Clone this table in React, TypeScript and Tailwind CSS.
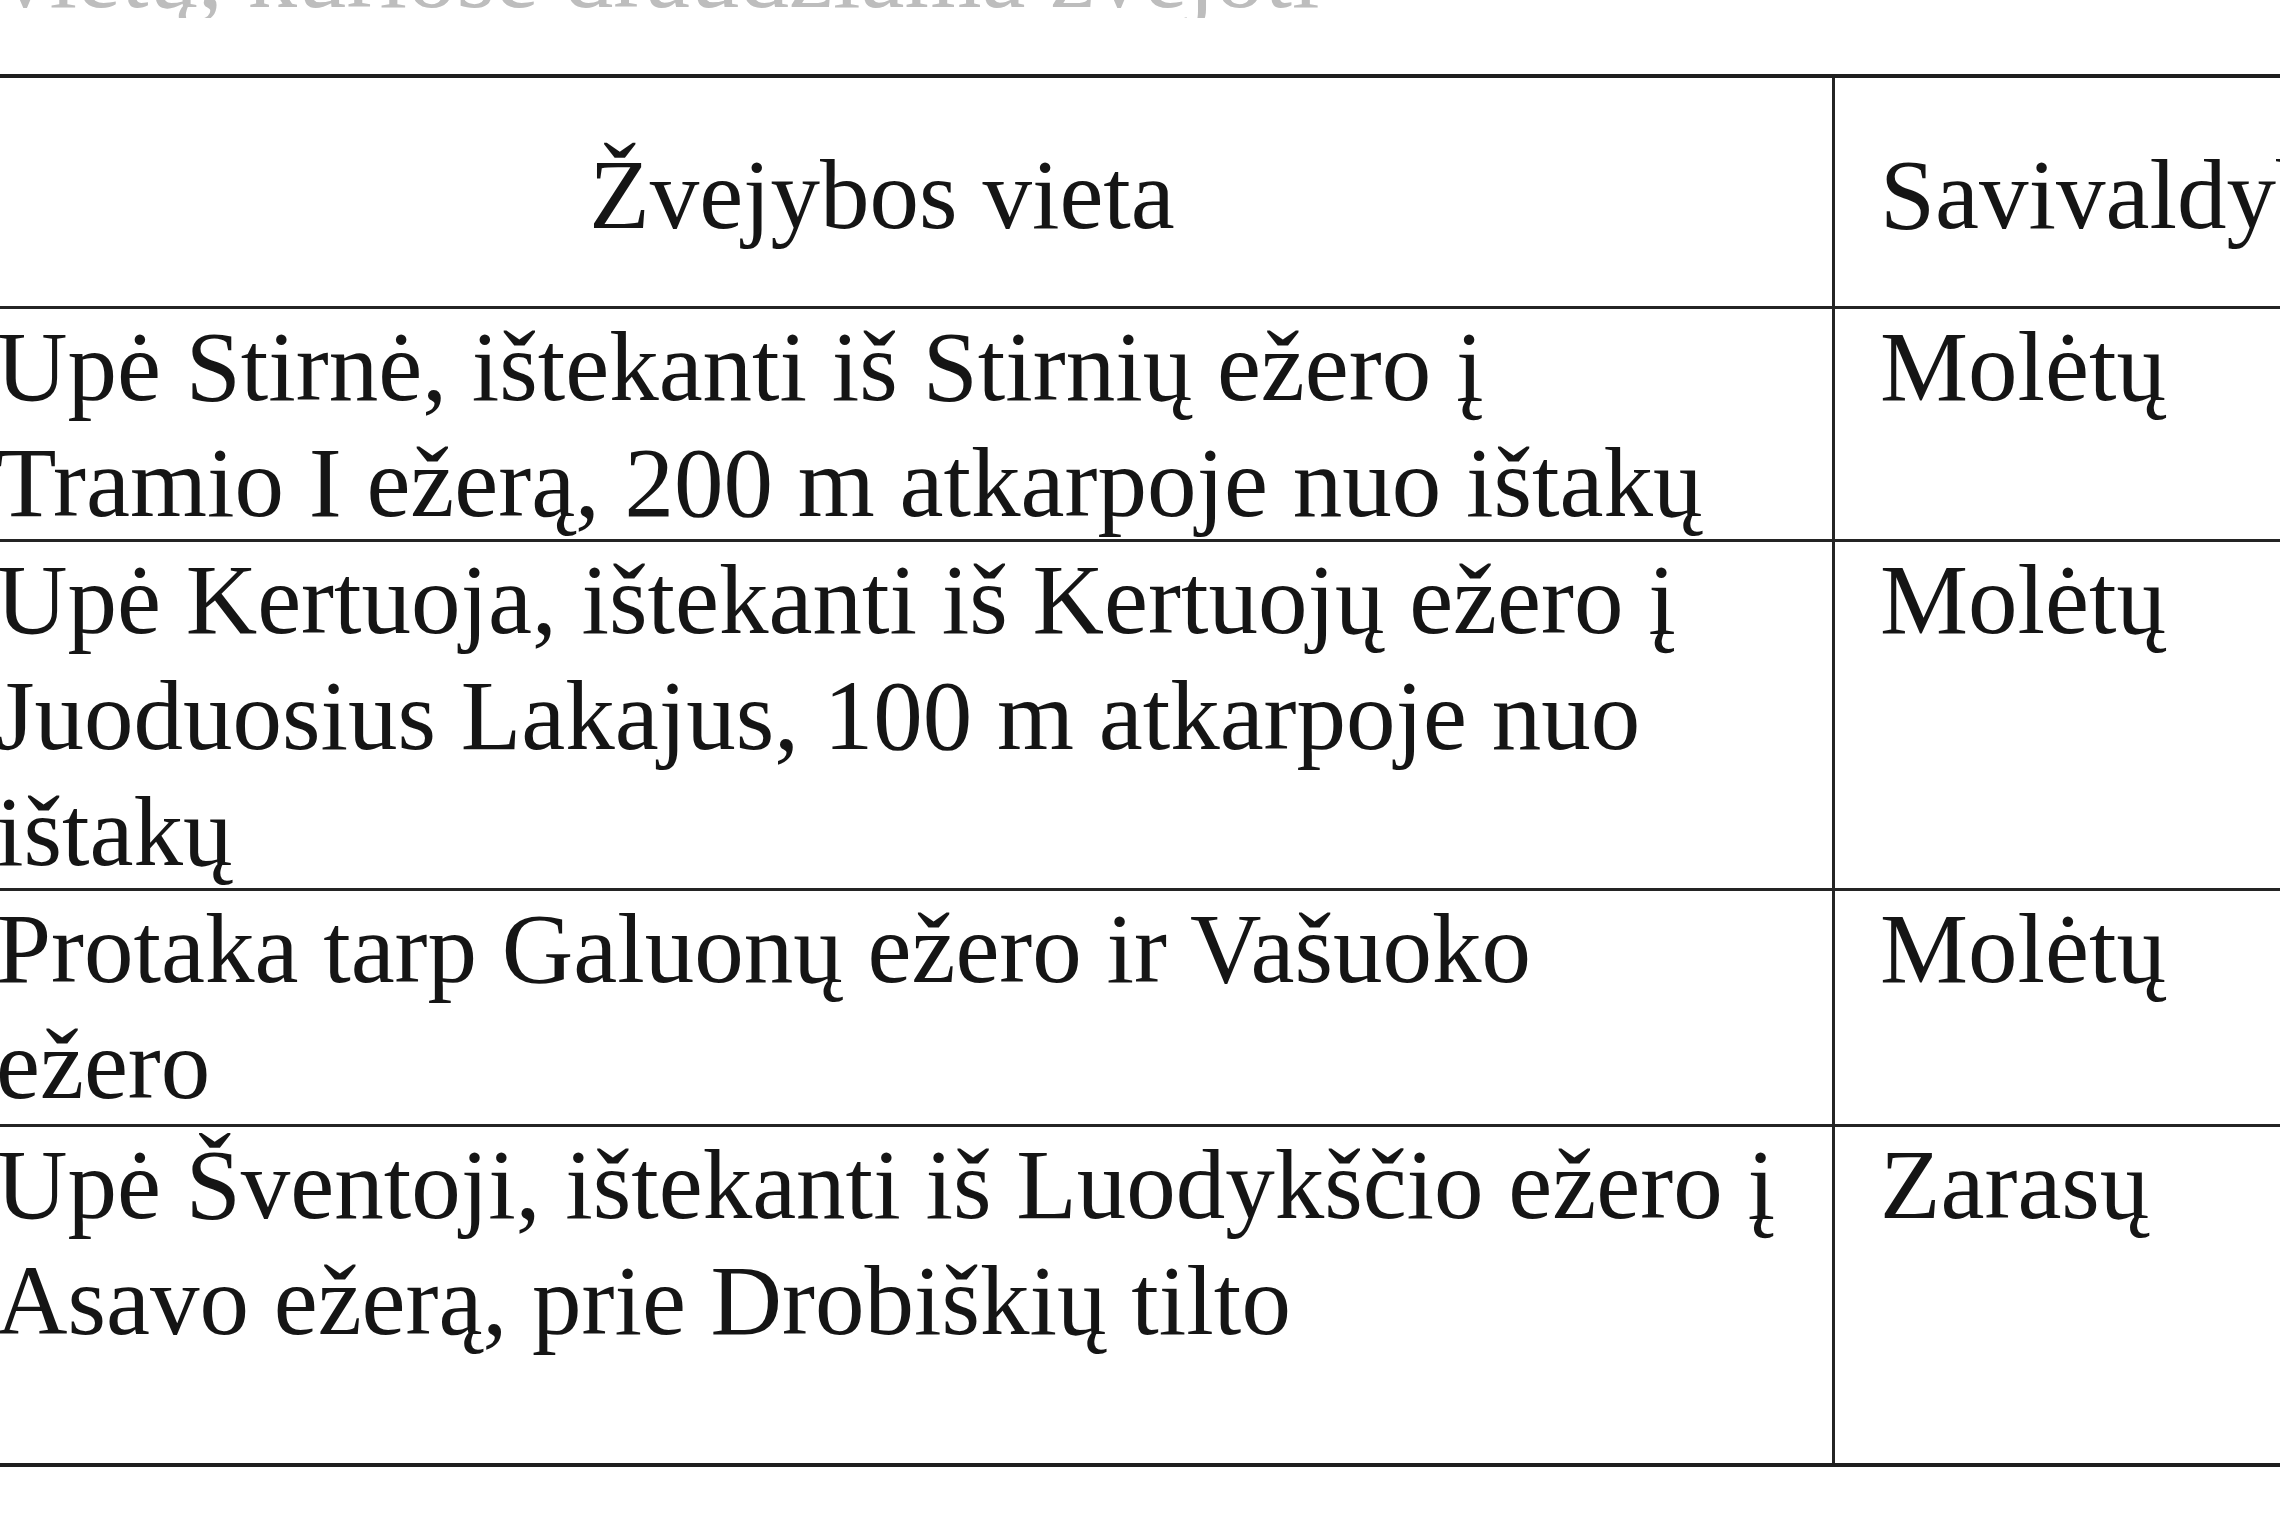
const rows = [
  {
    place: ["Upė Stirnė, ištekanti iš Stirnių ežero į", "Tramio I ežerą, 200 m atkarpoje nuo ištakų"],
    town: "Molėtų",
    h: "h-[233px] border-b-[3px]",
  },
  {
    place: ["Upė Kertuoja, ištekanti iš Kertuojų ežero į", "Juoduosius Lakajus, 100 m atkarpoje nuo", "ištakų"],
    town: "Molėtų",
    h: "h-[349px] border-b-[3px]",
  },
  {
    place: ["Protaka tarp Galuonų ežero ir Vašuoko", "ežero"],
    town: "Molėtų",
    h: "h-[236px] border-b-[3px]",
  },
  {
    place: ["Upė Šventoji, ištekanti iš Luodykščio ežero į", "Asavo ežerą, prie Drobiškių tilto"],
    town: "Zarasų",
    h: "h-[336px]",
  },
]

export default function App() {
  return (
    <div className="w-[2280px] h-[1520px] overflow-hidden bg-white font-['Liberation_Serif','Times_New_Roman',serif] text-[99px] leading-[116px] text-[#151515]">
      {/* bottom of the text line above, cut by the page edge */}
      <div className="h-[18px] overflow-hidden">
        <div className="-mt-[84px] whitespace-nowrap text-[#bdbdbd]">vietų, kuriose draudžiama žvejoti</div>
      </div>

      <div className="mt-[56px] -ml-[68px] w-[2420px] border-t-4 border-b-4 border-[#1e1e1e]">
        {/* Header */}
        <div className="flex h-[231px] border-b-[3px] border-[#242424]">
          <div className="w-[1900px] shrink-0 flex items-center justify-center pt-[5px] whitespace-nowrap">
            Žvejybos vieta
          </div>
          <div className="flex-1 flex items-center pt-[5px] pl-[45px] border-l-[3px] border-[#242424] whitespace-nowrap">
            Savivaldybė
          </div>
        </div>

        {rows.map((row, i) => (
          <div key={i} className={`flex border-[#242424] ${row.h}`}>
            <div className="w-[1900px] shrink-0 pl-[64px] whitespace-nowrap">
              {row.place.map((line, j) => (
                <div key={j}>{line}</div>
              ))}
            </div>
            <div className="flex-1 pl-[45px] border-l-[3px] border-[#242424] whitespace-nowrap">{row.town}</div>
          </div>
        ))}
      </div>
    </div>
  )
}
